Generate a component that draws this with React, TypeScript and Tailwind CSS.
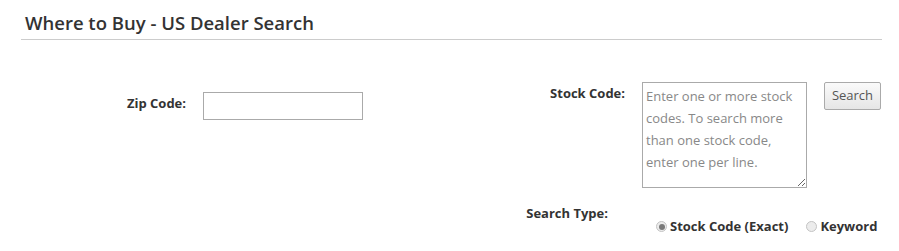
import React from 'react';

const Radio: React.FC<{ checked?: boolean; label: string }> = ({ checked, label }) => (
  <label className="flex items-center">
    <span className="w-[11px] h-[11px] rounded-full border border-[#c4c4c4] bg-[#ececec] flex items-center justify-center">
      {checked && <span className="w-[6px] h-[6px] rounded-full bg-[#7a7a7a]" />}
    </span>
    <span className="ml-[3px] text-[13px] font-bold text-[#333]">{label}</span>
  </label>
);

export default function App() {
  return (
    <div className="w-[899px] h-[251px] bg-white pl-[21px] pt-[10px] font-['Open_Sans',sans-serif] text-[#333] overflow-hidden">
      {/* Heading */}
      <h2 className="w-[861px] pl-[4px] pb-[4px] border-b border-[#ccc] text-[18.5px] leading-[25px] font-semibold text-[#333]">
        Where to Buy - US Dealer Search
      </h2>

      {/* Row 1: zip + stock code */}
      <div className="flex items-start mt-[42px] w-max">
        <div className="shrink-0 w-[165px] text-right text-[13px] font-bold mt-[12px]">Zip Code:</div>
        <input
          type="text"
          className="shrink-0 ml-[17px] mt-[10px] w-[160px] h-[28px] border border-[#aaa] bg-white outline-none"
        />
        <div className="shrink-0 w-[262px] text-right text-[13px] font-bold mt-[2px]">Stock Code:</div>
        <textarea
          className="shrink-0 ml-[17px] w-[165px] h-[106px] border border-[#aaa] px-[3px] py-[2px] text-[13px] leading-[22px] text-[#555] placeholder:text-[#888] outline-none"
          placeholder="Enter one or more stock codes. To search more than one stock code, enter one per line."
        />
        <button className="shrink-0 ml-[17px] w-[57px] h-[28px] border border-[#aaa] rounded-[2px] bg-gradient-to-b from-[#fafafa] to-[#e6e6e6] text-[13px] text-[#555]">
          Search
        </button>
      </div>

      {/* Row 2: search type */}
      <div className="flex items-start mt-[16px] w-max">
        <div className="shrink-0 w-[587px] text-right text-[13px] font-bold">Search Type:</div>
        <div className="ml-[48px] mt-[13px] flex items-center gap-[18px]">
          <Radio checked label="Stock Code (Exact)" />
          <Radio label="Keyword" />
        </div>
      </div>
    </div>
  );
}
